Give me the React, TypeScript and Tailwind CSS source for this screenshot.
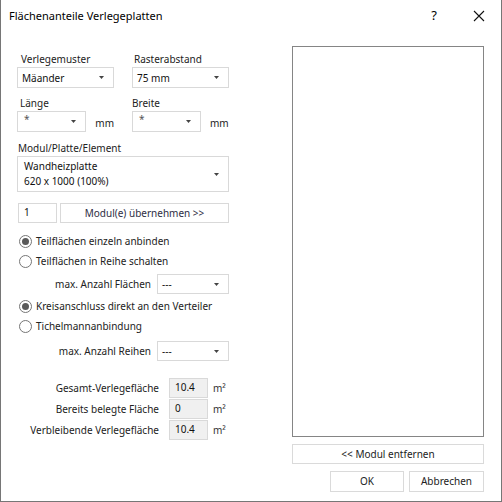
import React from 'react';

const font = { fontFamily: '"Noto Sans", "Segoe UI", sans-serif' };

const Arrow = () => (
  <svg width="5" height="3" viewBox="0 0 5 3" className="mr-[1px] shrink-0">
    <path d="M0 0h5L2.5 3z" fill="#444" />
  </svg>
);

const Select = ({ value, className = '' }: { value: React.ReactNode; className?: string }) => (
  <div className={`flex items-center justify-between border border-[#d9d9d9] bg-white pl-[4px] pr-[8px] text-[10px] text-[#111] ${className}`}>
    <div className="whitespace-nowrap leading-[14px]">{value}</div>
    <Arrow />
  </div>
);

const Radio = ({ checked, label }: { checked?: boolean; label: string }) => (
  <div className="flex h-[20px] items-center gap-[4px] pl-[2px]">
    <div className="flex h-[13px] w-[13px] shrink-0 items-center justify-center rounded-full border border-[#767676] bg-white">
      {checked && <div className="h-[7px] w-[7px] rounded-full bg-[#5a5a5a]" />}
    </div>
    <span className="whitespace-nowrap text-[10px] text-[#222]">{label}</span>
  </div>
);

const ReadRow = ({ label, value }: { label: string; value: string }) => (
  <div className="flex h-[20px] items-center">
    <div className="w-[152px] whitespace-nowrap pr-[10px] text-right text-[10px] text-[#222]">{label}</div>
    <div className="flex h-[20px] w-[39px] items-start border border-[#d9d9d9] bg-[#f0f0f0] pl-[5px] pt-[1px] text-[10px] text-[#111]">{value}</div>
    <div className="ml-[5px] text-[10px] text-[#333]">m²</div>
  </div>
);

export default function App() {
  return (
    <div style={font} className="flex h-[502px] w-[502px] flex-col border-x border-b border-[#767676] bg-white">
      {/* title bar */}
      <div className="flex h-[32px] shrink-0 items-center pl-[8px]">
        <div className="flex-1 whitespace-nowrap text-[11px] text-black">Flächenanteile Verlegeplatten</div>
        <div className="w-[20px] text-center text-[13px] text-black">?</div>
        <div className="ml-[25px] mr-[12px] flex w-[20px] justify-center">
          <svg width="12" height="12" viewBox="0 0 12 12">
            <path d="M1 1l10 10M11 1L1 11" stroke="#111" strokeWidth="1.1" />
          </svg>
        </div>
      </div>

      <div className="flex flex-1">
        {/* left column */}
        <div className="ml-[16px] flex w-[212px] shrink-0 flex-col pt-[19px]">
          <div className="flex gap-[18px]">
            <div className="w-[97px]">
              <div className="h-[16px] pl-[4px] text-[10px] leading-[16px] text-[#222]">Verlegemuster</div>
              <Select value="Mäander" className="h-[21px]" />
            </div>
            <div className="w-[97px]">
              <div className="h-[16px] pl-[2px] text-[10px] leading-[16px] text-[#222]">Rasterabstand</div>
              <Select value="75 mm" className="h-[21px]" />
            </div>
          </div>

          <div className="mt-[7px] flex gap-[18px]">
            <div className="w-[97px]">
              <div className="h-[16px] pl-[3px] text-[10px] leading-[16px] text-[#222]">Länge</div>
              <div className="flex items-end">
                <Select value={<span className="relative top-[-3px] pl-[2px] text-[#555]">*</span>} className="h-[21px] w-[70px]" />
                <span className="ml-[9px] pb-[1px] text-[10px] text-[#222]">mm</span>
              </div>
            </div>
            <div className="w-[97px]">
              <div className="h-[16px] text-[10px] leading-[16px] text-[#222]">Breite</div>
              <div className="flex items-end">
                <Select value={<span className="relative top-[-3px] pl-[2px] text-[#555]">*</span>} className="h-[21px] w-[69px]" />
                <span className="ml-[9px] pb-[1px] text-[10px] text-[#222]">mm</span>
              </div>
            </div>
          </div>

          <div className="mt-[8px] h-[16px] pl-[1px] text-[10px] leading-[16px] text-[#222]">Modul/Platte/Element</div>
          <Select
            value={
              <div className="pl-[2px] leading-[15px]">
                <div>Wandheizplatte</div>
                <div>620 x 1000 (100%)</div>
              </div>
            }
            className="h-[36px]"
          />

          <div className="mt-[11px] flex h-[20px] gap-[3px] pl-[1px]">
            <div className="w-[39px] border border-[#d9d9d9] pl-[5px] text-[10px] leading-[16px] text-[#111]">1</div>
            <div className="flex flex-1 items-center justify-center whitespace-nowrap border border-[#d9d9d9] bg-white text-[10px] text-[#2e2e44]">
              Modul(e) übernehmen &gt;&gt;
            </div>
          </div>

          <div className="mt-[8px]">
            <Radio checked label="Teilflächen einzeln anbinden" />
            <Radio label="Teilflächen in Reihe schalten" />
          </div>
          <div className="mt-[3px] flex items-center">
            <div className="w-[140px] whitespace-nowrap pr-[6px] text-right text-[10px] text-[#222]">max. Anzahl Flächen</div>
            <Select value="---" className="h-[20px] w-[72px]" />
          </div>

          <div className="mt-[2px]">
            <Radio checked label="Kreisanschluss direkt an den Verteiler" />
            <Radio label="Tichelmannanbindung" />
          </div>
          <div className="mt-[5px] flex items-center">
            <div className="w-[140px] whitespace-nowrap pr-[6px] text-right text-[10px] text-[#222]">max. Anzahl Reihen</div>
            <Select value="---" className="h-[20px] w-[72px]" />
          </div>

          <div className="mt-[17px] flex flex-col gap-[1px]">
            <ReadRow label="Gesamt-Verlegefläche" value="10.4" />
            <ReadRow label="Bereits belegte Fläche" value="0" />
            <ReadRow label="Verbleibende Verlegefläche" value="10.4" />
          </div>
        </div>

        {/* right column */}
        <div className="ml-[63px] flex w-[192px] shrink-0 flex-col pt-[14px]">
          <div className="h-[391px] border border-[#858585] bg-white" />
          <div className="mt-[7px] flex h-[20px] items-center justify-center border border-[#dadada] bg-white text-[10px] text-[#222]">
            &lt;&lt; Modul entfernen
          </div>
          <div className="mt-[7px] flex justify-end gap-[5px]">
            <div className="flex h-[21px] w-[74px] items-center justify-center border border-[#dadada] bg-white text-[10px] text-[#222]">OK</div>
            <div className="flex h-[21px] w-[75px] items-center justify-center border border-[#dadada] bg-white text-[10px] text-[#222]">Abbrechen</div>
          </div>
        </div>
      </div>
    </div>
  );
}
